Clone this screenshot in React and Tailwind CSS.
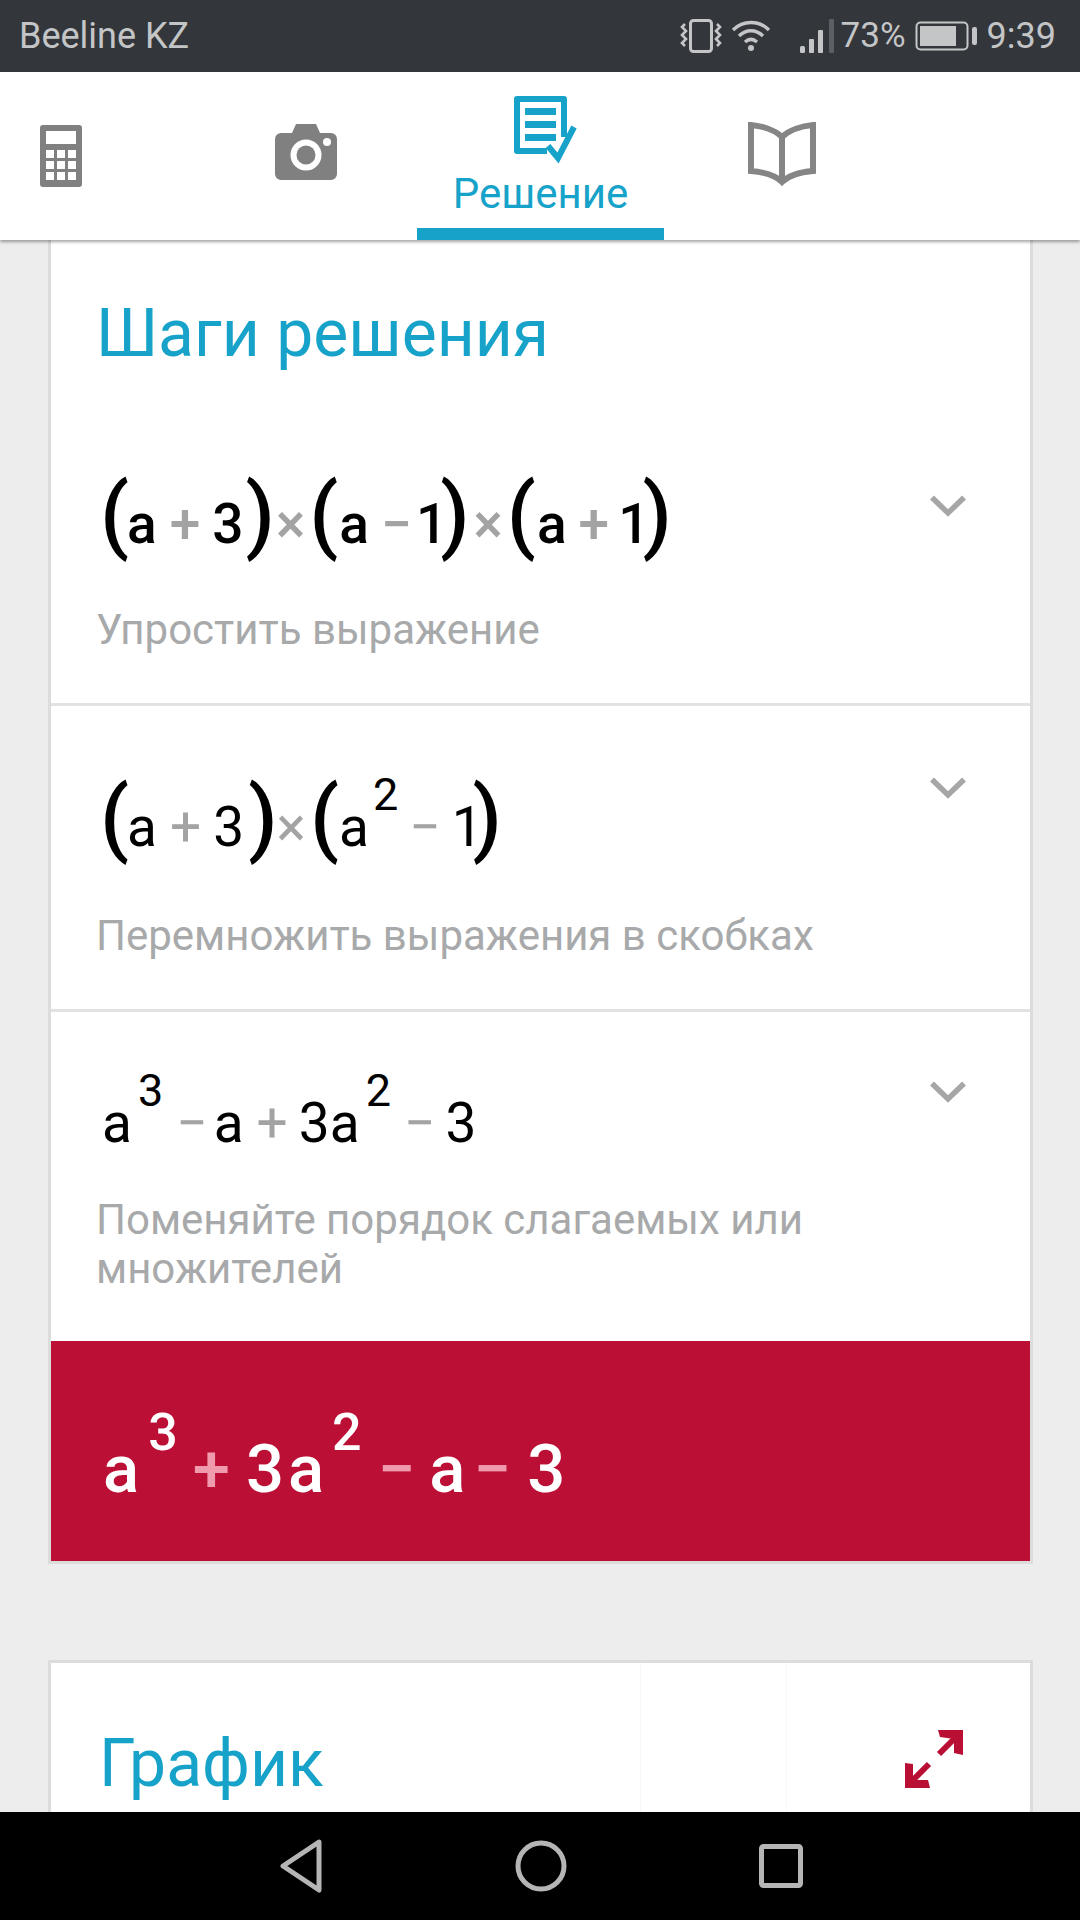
import React from "react";

const Chevron = ({ className }) => (
  <svg width="38" height="24" viewBox="0 0 38 24" className={className} fill="none">
    <path d="M3 3.5 L19 19 L35 3.5" stroke="#a6a6a6" strokeWidth="5.5" />
  </svg>
);

const Calc = () => (
  <svg width="42" height="62" viewBox="0 0 42 62">
    <rect width="42" height="62" rx="3" fill="#808080" />
    <rect x="6" y="6" width="30" height="13" fill="#fff" />
    {[25, 36, 47].map((y) =>
      [6, 17, 28].map((x) => <rect key={x + "-" + y} x={x} y={y} width="8" height="8" fill="#fff" />)
    )}
  </svg>
);

const Camera = () => (
  <svg width="62" height="56" viewBox="0 0 62 56">
    <path d="M6 9h11l4-9h20l4 9h11a6 6 0 0 1 6 6v35a6 6 0 0 1-6 6H6a6 6 0 0 1-6-6V15a6 6 0 0 1 6-6z" fill="#808080" />
    <circle cx="31" cy="31" r="15.5" fill="#fff" />
    <circle cx="31" cy="31" r="9.5" fill="#808080" />
    <circle cx="52" cy="18" r="4" fill="#fff" />
  </svg>
);

const Doc = () => (
  <svg width="64" height="68" viewBox="0 0 64 68" fill="none">
    <path d="M34 55H4V3h47v38" stroke="#17a3c9" strokeWidth="6" strokeLinejoin="round" />
    <rect x="12" y="12" width="31" height="7" fill="#17a3c9" />
    <rect x="12" y="25" width="31" height="7" fill="#17a3c9" />
    <rect x="12" y="38" width="31" height="7" fill="#17a3c9" />
    <path d="M35 50 L45 62 L61 31" stroke="#17a3c9" strokeWidth="6" />
  </svg>
);

const Book = () => (
  <svg width="68" height="64" viewBox="0 0 68 64" fill="none">
    <path d="M34 15 C27 8 14 4 3 3 V49 C15 50 27 53 34 60 C41 53 53 50 65 49 V3 C54 4 41 8 34 15 Z M34 15 V58" stroke="#858585" strokeWidth="6" />
  </svg>
);

const Expand = () => (
  <svg width="62" height="62" viewBox="0 0 62 62" fill="none">
    <path d="M35 2 H60 V27 L51 25 V11 L37 9 Z" fill="#b90f35" />
    <path d="M56 6 L36 26" stroke="#b90f35" strokeWidth="6" />
    <path d="M27 60 H2 V35 L10 36 V52 H25 Z" fill="#b90f35" />
    <path d="M6 56 L26 36" stroke="#b90f35" strokeWidth="6" />
  </svg>
);

const Vibrate = () => (
  <svg width="42" height="34" viewBox="0 0 42 34" fill="none" stroke="#c3c5c7">
    <rect x="10.5" y="1.5" width="21" height="31" rx="3" strokeWidth="3" />
    <path d="M5 5l-3 3 4 4-4 4 4 4-4 4 3 3" strokeWidth="2.6" />
    <path d="M37 5l3 3-4 4 4 4-4 4 4 4-3 3" strokeWidth="2.6" />
  </svg>
);

const Wifi = () => (
  <svg width="40" height="32" viewBox="0 0 40 32" fill="none" stroke="#c3c5c7" strokeWidth="3.4">
    <path d="M2 10 C12 0 28 0 38 10" />
    <path d="M8 16 C15 9 25 9 32 16" />
    <path d="M14 22 C18 18.500 22 18.500 26 22" />
    <circle cx="20" cy="28" r="3" fill="#c3c5c7" stroke="none" />
  </svg>
);

const Signal = () => (
  <svg width="34" height="34" viewBox="0 0 34 34">
    <rect x="0" y="27" width="5" height="7" rx="1.500" fill="#c3c5c7" />
    <rect x="9" y="20" width="5" height="14" rx="1" fill="#c3c5c7" />
    <rect x="18" y="11" width="5" height="23" rx="1" fill="#c3c5c7" />
    <rect x="29" y="0" width="5" height="34" rx="1" fill="#5c6064" />
  </svg>
);

const Battery = () => (
  <svg width="62" height="30" viewBox="0 0 62 30" fill="none">
    <rect x="1.500" y="1.500" width="51" height="27" rx="4" stroke="#c3c5c7" strokeWidth="2" />
    <rect x="5" y="5" width="36" height="20" fill="#c3c5c7" />
    <rect x="57" y="6" width="5" height="18" rx="2" fill="#c3c5c7" />
  </svg>
);

const Hint = ({ children }) => (
  <p className="pr-[100px] text-[42px] leading-[49px] text-[#a8a9aa]">{children}</p>
);

export default function App() {
  return (
    <div className="flex h-[1920px] w-[1080px] flex-col overflow-hidden bg-[#ededed] font-['Roboto',sans-serif]">
      <header className="flex h-[72px] shrink-0 items-center bg-[#33363a] text-[#c3c5c7]">
        <span className="ml-[19px] text-[36px]">Beeline KZ</span>
        <div className="ml-auto flex items-center">
          <Vibrate />
          <span className="ml-[9px]"><Wifi /></span>
          <span className="ml-[29px]"><Signal /></span>
          <span className="ml-[7px] text-[35px]">73%</span>
          <span className="ml-[9px]"><Battery /></span>
          <span className="ml-[10px] mr-[24px] text-[36px]">9:39</span>
        </div>
      </header>

      <nav className="z-10 flex h-[168px] shrink-0 bg-white shadow-[0_2px_3px_rgba(0,0,0,0.35)]">
        <div className="ml-[40px] mt-[53px]"><Calc /></div>
        <div className="ml-[193px] mt-[52px]"><Camera /></div>
        <div className="ml-[80px] flex h-full w-[247px] flex-col items-center border-b-[12px] border-[#17a3c9]">
          <div className="ml-[8px] mt-[24px] h-[74px]"><Doc /></div>
          <span className="text-[42px] leading-[48px] text-[#17a3c9]">Решение</span>
        </div>
        <div className="ml-[84px] mt-[50px]"><Book /></div>
      </nav>

      <main className="flex min-h-0 flex-1 flex-col overflow-hidden px-[48px] text-black">
        <section className="w-[985px] shrink-0 border-x-[3px] border-b-[3px] border-[#dcdcdc] bg-white">
          <h1 className="h-[202px] pl-[45px] pt-[59px] text-[66px] font-normal leading-[70px] text-[#17a3c9]">Шаги решения</h1>

          <div className="relative h-[264px] border-b-[3px] border-[#e2e2e2] pl-[49px]">
            <div className="flex h-[125px] items-baseline font-medium whitespace-pre pt-[10px] text-[55px] leading-[125px]">
              <span className="text-[84px]">(</span>
              <span className="-ml-[2px]">a</span>
              <span className="ml-[13px] text-[#a3a3a3]">+</span>
              <span className="ml-[12px]">3</span>
              <span className="ml-[2px] text-[84px]">)</span>
              <span className="ml-[1px] text-[#a3a3a3]">×</span>
              <span className="ml-[4px] text-[84px]">(</span>
              <span className="ml-[1px]">a</span>
              <span className="ml-[12px] text-[#a3a3a3]">−</span>
              <span className="ml-[4px]">1</span>
              <span className="-ml-[7px] text-[84px]">)</span>
              <span className="ml-[4px] text-[#a3a3a3]">×</span>
              <span className="ml-[4px] text-[84px]">(</span>
              <span className="ml-[1px]">a</span>
              <span className="ml-[12px] text-[#a3a3a3]">+</span>
              <span className="ml-[9px]">1</span>
              <span className="-ml-[7px] text-[84px]">)</span>
            </div>
            <div className="-ml-[4px] mt-[38px]"><Hint>Упростить выражение</Hint></div>
            <Chevron className="absolute right-[63px] top-[52px]" />
          </div>

          <div className="relative h-[306px] border-b-[3px] border-[#e2e2e2] pl-[49px]">
            <div className="flex h-[125px] items-baseline whitespace-pre pt-[49px] text-[55px] leading-[125px]">
              <span className="text-[84px] font-medium">(</span>
              <span className="-ml-[2px]">a</span>
              <span className="ml-[13px] text-[#a3a3a3]">+</span>
              <span className="ml-[12px]">3</span>
              <span className="ml-[4px] text-[84px] font-medium">)</span>
              <span className="-ml-[1px] text-[#a3a3a3]">×</span>
              <span className="ml-[4px] text-[84px] font-medium">(</span>
              <span>a</span>
              <span className="ml-[4px] -translate-y-[36px] text-[45px]">2</span>
              <span className="ml-[11px] text-[#a3a3a3]">−</span>
              <span className="ml-[11px]">1</span>
              <span className="-ml-[10px] text-[84px] font-medium">)</span>
            </div>
            <div className="-ml-[4px] mt-[80px]"><Hint>Перемножить выражения в скобках</Hint></div>
            <Chevron className="absolute right-[63px] top-[70px]" />
          </div>

          <div className="relative h-[329px] pl-[47px]">
            <div className="flex h-[125px] items-baseline whitespace-pre pt-[49px] text-[55px] leading-[125px]">
              <span className="ml-[4px]">a</span>
              <span className="ml-[6px] -translate-y-[36px] text-[45px]">3</span>
              <span className="ml-[13px] text-[#a3a3a3]">−</span>
              <span className="ml-[6px]">a</span>
              <span className="ml-[13px] text-[#a3a3a3]">+</span>
              <span className="ml-[11px]">3</span>
              <span>a</span>
              <span className="ml-[6px] -translate-y-[36px] text-[45px]">2</span>
              <span className="ml-[13px] text-[#a3a3a3]">−</span>
              <span className="ml-[10px]">3</span>
            </div>
            <div className="-ml-[2px] mt-[58px]"><Hint>Поменяйте порядок слагаемых или множителей</Hint></div>
            <Chevron className="absolute right-[63px] top-[68px]" />
          </div>

          <div className="flex h-[220px] items-baseline whitespace-pre bg-[#bb0f35] pl-[52px] pt-[18px] text-[67px] font-medium leading-[220px] text-white">
            <span>a</span>
            <span className="ml-[9px] -translate-y-[42px] text-[52px]">3</span>
            <span className="ml-[15px] text-[#f09aae]">+</span>
            <span className="ml-[16px]">3</span>
            <span className="ml-[4px]">a</span>
            <span className="ml-[8px] -translate-y-[42px] text-[52px]">2</span>
            <span className="ml-[16px] text-[#f09aae]">−</span>
            <span className="ml-[14px]">a</span>
            <span className="ml-[8px] text-[#f09aae]">−</span>
            <span className="ml-[16px]">3</span>
          </div>
        </section>

        <section className="relative mt-[96px] flex h-[200px] w-[985px] shrink-0 items-start justify-between border-x-[3px] border-t-[3px] border-[#dcdcdc] bg-white pl-[48px] pr-[65px]">
          <h2 className="mt-[66px] text-[66px] font-normal leading-[70px] text-[#17a3c9]">График</h2>
          <div className="mt-[65px]"><Expand /></div>
          <div className="absolute left-[589px] top-0 h-[150px] w-px bg-[#f8f8f8]" />
          <div className="absolute left-[735px] top-0 h-[150px] w-px bg-[#fbf7f8]" />
        </section>
      </main>

      <footer className="z-10 flex h-[108px] shrink-0 items-center bg-black">
        <svg className="ml-[279px]" width="44" height="54" viewBox="0 0 44 54" fill="none">
          <path d="M40 3 L4 27 L40 51 Z" stroke="#b5b5b5" strokeWidth="5" strokeLinejoin="round" />
        </svg>
        <svg className="ml-[192px]" width="52" height="52" viewBox="0 0 52 52" fill="none">
          <circle cx="26" cy="26" r="23" stroke="#b5b5b5" strokeWidth="5" />
        </svg>
        <svg className="ml-[192px]" width="44" height="44" viewBox="0 0 44 44" fill="none">
          <rect x="2.500" y="2.500" width="39" height="39" rx="2" stroke="#b5b5b5" strokeWidth="5" />
        </svg>
      </footer>
    </div>
  );
}
